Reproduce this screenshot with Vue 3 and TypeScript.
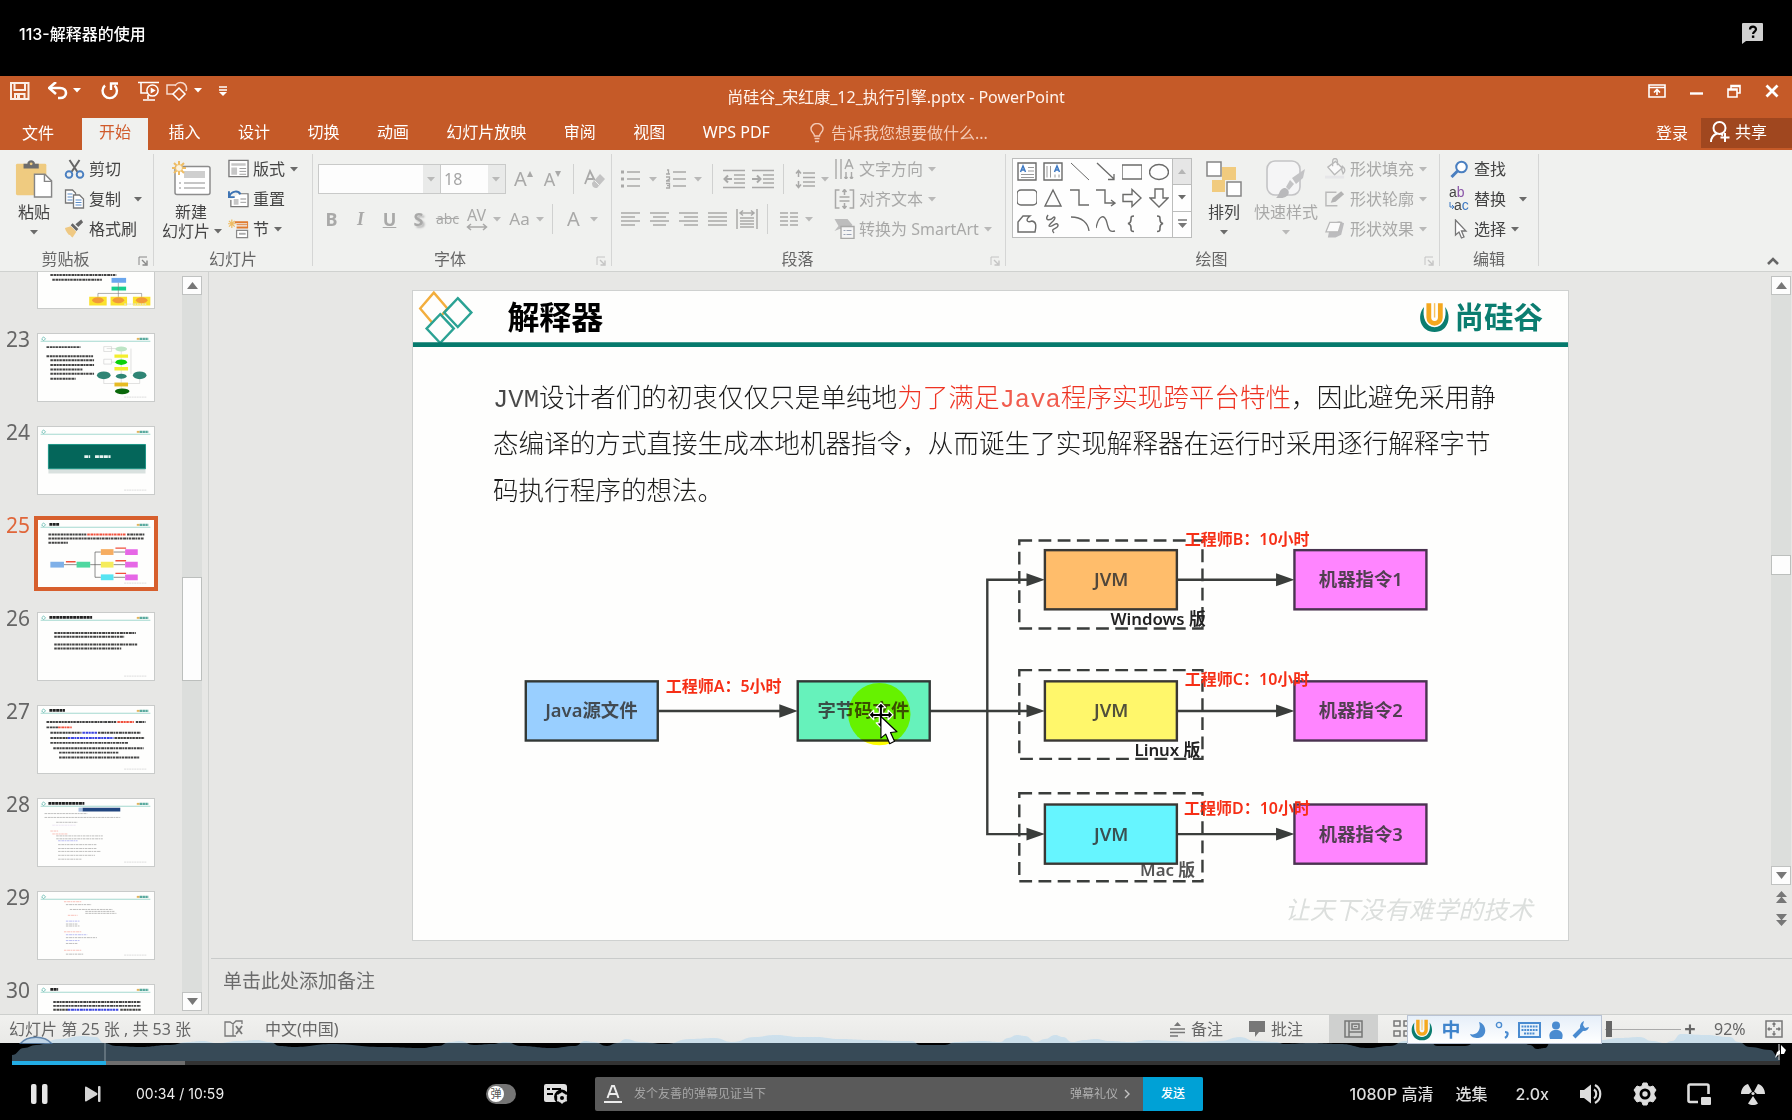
<script setup lang="ts">
import { h, ref } from 'vue'

type IconDef = [number, number, string]

const G = '#a9a9a8'
const D = '#6b6b6a'

const icons: Record<string, IconDef> = {
  help: [22, 22, '<path d="M1 0h19a1 1 0 0 1 1 1v16a1 1 0 0 1-1 1H4l-4 3V1a1 1 0 0 1 1-1z" fill="#d0d0d0"/><path d="M8 6.500C8 2.800 14 2.800 14 6.300c0 2.200-2.900 2.300-2.900 4.700" fill="none" stroke="#000" stroke-width="2.200"/><rect x="9.900" y="12.500" width="2.400" height="2.400" fill="#000"/>'],
  save: [20, 18, '<path d="M1 1h17.500v16H1z M4.500 1v7h10.500V1 M5 17v-5h9.500v5" fill="none" stroke="#fbeee8" stroke-width="2"/><path d="M7 13h3v4H7z" fill="#fbeee8"/>'],
  undo: [20, 18, '<path d="M2 6h10c8 0 8 10 0 10h-2" fill="none" stroke="#fff" stroke-width="2.600"/><path d="M8 0L1 6l7 6" fill="none" stroke="#fff" stroke-width="2.600"/>'],
  redo: [20, 18, '<path d="M5 3.500A7.200 7.200 0 1 0 14.500 3.500" fill="none" stroke="#fff" stroke-width="2.400"/><path d="M11 8V1.500h7" fill="none" stroke="#fff" stroke-width="2.400"/>'],
  present: [22, 20, '<path d="M0 1.500h21M3 2v10h6M10 14v4M5 19h12" fill="none" stroke="#fff" stroke-width="1.600"/><circle cx="14.500" cy="9.500" r="5.600" fill="#c55a28" stroke="#fff" stroke-width="1.500"/><path d="M12.700 6.500l5 3-5 3z" fill="#fff"/>'],
  shapes: [23, 20, '<path d="M8 13H1V4h9M9 5a5.500 5.500 0 1 1 11 5" fill="none" stroke="#f6d9cc" stroke-width="1.500"/><path d="M13 7l6 6-6 6-6-6z" fill="none" stroke="#fff" stroke-width="1.500"/>'],
  custom: [8, 10, '<path d="M0 1h8M0 4h8" stroke="#fff" stroke-width="1.300"/><path d="M0 6h8l-4 4z" fill="#fff"/>'],
  ribbonOpt: [18, 14, '<path d="M1 1h16v12H1zM1 3.500h16" fill="none" stroke="#fff" stroke-width="1.600"/><path d="M9 11V6M6 8.500L9 5.500l3 3" fill="none" stroke="#fff" stroke-width="1.600"/>'],
  min: [13, 14, '<path d="M0 9.500h13" stroke="#fff" stroke-width="2.400"/>'],
  restore: [14, 14, '<path d="M1 5h9v8H1zM4 5V1.500h9V9h-3M4 2.500h9M1 6h9" fill="none" stroke="#fff" stroke-width="1.600"/>'],
  close: [14, 14, '<path d="M1.500 1.500l11 11M12.500 1.500l-11 11" stroke="#fff" stroke-width="2.800"/>'],
  bulb: [14, 20, '<path d="M4.500 13C4.500 10 1 9.500 1 6a6 5.500 0 0 1 12 0c0 3.500-3.500 4-3.500 7zM4.500 15.500h5M5 18.500h4" fill="none" stroke="#f3c9b5" stroke-width="1.400"/>'],
  person: [20, 22, '<circle cx="9.500" cy="7" r="6" fill="none" stroke="#fff" stroke-width="2"/><path d="M1 21c0-4 2-7 6-8.500M11 13l2 1.500M15 12v9M10.500 16.500H19.500" fill="none" stroke="#fff" stroke-width="2"/>'],
  paste: [38, 40, '<rect x="0" y="4" width="32" height="33" rx="1.500" fill="#efcb80"/><path d="M8 9V4h4c0-5 8-5 8 0h4v5z" fill="#6d6d6d"/><circle cx="16" cy="4" r="1.500" fill="#efcb80"/><path d="M19.500 15h11l7 7v17h-18z" fill="#fff" stroke="#858585" stroke-width="1.500"/><path d="M30 15v7.500h7.500" fill="none" stroke="#858585" stroke-width="1.500"/>'],
  cut: [20, 20, '<path d="M5 1l8 12M15 1L7 13" stroke="#666" stroke-width="2"/><circle cx="4.500" cy="15.500" r="3.300" fill="none" stroke="#4a7fc0" stroke-width="1.900"/><circle cx="15.500" cy="15.500" r="3.300" fill="none" stroke="#4a7fc0" stroke-width="1.900"/>'],
  copy: [20, 20, '<path d="M1 1h7l3 3v10H1z" fill="#fff" stroke="#777" stroke-width="1.300"/><path d="M3 5h5M3 8h5M3 11h5" stroke="#5b8cc7"/><path d="M9 6h6l4 4v9H9z" fill="#fff" stroke="#777" stroke-width="1.300"/><path d="M11 11h6M11 13.500h6M11 16h6" stroke="#5b8cc7"/>'],
  brush: [22, 20, '<path d="M1 9l6-2 6 6-4 6c-2-1-2-3-4-3 0 0-3-3-4-7z" fill="#efc983"/><path d="M7 6l6 6 2-2-6-6zM12 5l6-5 2 3-5 5z" fill="#666"/>'],
  launch: [10, 10, '<path d="M1 9V1h8" fill="none" stroke="#888"/><path d="M4 4l4 4M9 4.500V9H4.500" fill="none" stroke="#888" stroke-width="1.400"/>'],
  launchOff: [10, 10, '<path d="M1 9V1h8" fill="none" stroke="#c4c4c4"/><path d="M4 4l4 4M9 4.500V9H4.500" fill="none" stroke="#c4c4c4" stroke-width="1.400"/>'],
  newSlide: [40, 36, '<rect x="4" y="5.500" width="35" height="28" rx="2" fill="#fff" stroke="#8d8d8d" stroke-width="1.500"/><path d="M13 10h21v7H13z" fill="#cfcfcf"/><path d="M13 22h21M13 27h21" stroke="#8d8d8d"/><path d="M8 22h2M8 27h2" stroke="#8d8d8d"/><g stroke="#eebc63" stroke-width="2"><path d="M8 0v14M1 7h14M3 2l10 10M13 2L3 12"/></g><circle cx="8" cy="7" r="3.500" fill="#fbf3df" stroke="#eebc63"/>'],
  layout: [22, 20, '<path d="M1 1h20v17H1z" fill="#fff" stroke="#777" stroke-width="1.400"/><path d="M3.500 4h15v2.500h-15zM3.500 8.500h6V16h-6z" fill="#c6c6c6"/><path d="M12 9.500h7M12 12.500h7M12 15.500h7" stroke="#999"/>'],
  reset: [22, 20, '<path d="M11 4.500h10V18H3v-7" fill="#fff" stroke="#777" stroke-width="1.300"/><path d="M6 10h5v6H6zM13 9h6v2h-6z" fill="#c6c6c6"/><path d="M13 13.500h6" stroke="#999"/><path d="M1 2v6h6M1.500 7C4 1 11 1 13 5" fill="none" stroke="#3d73b3" stroke-width="2"/>'],
  section: [22, 20, '<path d="M7 3h14M9 8.500h12" stroke="#e07b30" stroke-width="2"/><path d="M9 5.500h12M20.500 3v6" stroke="#e07b30"/><path d="M9 11.500h11.500V19H9z" fill="#fff" stroke="#888" stroke-width="1.300"/><path d="M11.500 15h7" stroke="#aaa" stroke-width="2"/><g stroke="#eebc63" stroke-width="1.300"><path d="M4 0v9M0 4.500h8M1 1.500l6 6M7 1.500l-6 6"/></g>'],
  eraser: [22, 20, `<path d="M1 15L6 2l5 10M3 10h6" fill="none" stroke="${G}" stroke-width="1.800"/><path d="M8 14L16 5l5 5-8 9c-4 0-5-2-5-5z" fill="#c3c3c3"/><path d="M10.500 11.500l5 5" stroke="#f0f1ef"/>`],
  bullets: [20, 20, `<path d="M6 3h13M6 10h13M6 17h13" stroke="${G}" stroke-width="1.500"/><path d="M0 1.500h3v3H0zM0 8.500h3v3H0zM0 15.500h3v3H0z" fill="${G}"/>`],
  numbers: [20, 20, `<path d="M7 3h13M7 10h13M7 17h13M1 1h1.500v4M0 5h4M0 8h3.500v2L0 12h4M0 14.500h3.500V19H0M1 16.700h2" fill="none" stroke="${G}" stroke-width="1.300"/>`],
  outdent: [22, 20, `<path d="M0 1.500h22M11 6h11M11 10h11M11 14h11M0 18.500h22" stroke="${G}" stroke-width="1.600"/><path d="M9 10H2M5 6.500L1.500 10 5 13.500" fill="none" stroke="${G}" stroke-width="2"/>`],
  indent: [22, 20, `<path d="M0 1.500h22M11 6h11M11 10h11M11 14h11M0 18.500h22" stroke="${G}" stroke-width="1.600"/><path d="M0 10h7M5 6.500L8.500 10 5 13.500" fill="none" stroke="${G}" stroke-width="2"/>`],
  spacing: [20, 20, `<path d="M8 4h12M8 8.500h12M8 13h12M8 17h12M3.500 2v6M3.500 12v6M1 4.500L3.500 1.500 6 4.500M1 15.500l2.500 3 2.500-3" fill="none" stroke="${G}" stroke-width="1.500"/>`],
  left: [20, 16, `<path d="M0 2h19M0 6h14M0 10h19M0 14h14" stroke="${G}" stroke-width="1.500"/>`],
  center: [20, 16, `<path d="M0 2h19M3 6h13M0 10h19M3 14h13" stroke="${G}" stroke-width="1.500"/>`],
  right: [20, 16, `<path d="M0 2h19M5 6h14M0 10h19M5 14h14" stroke="${G}" stroke-width="1.500"/>`],
  justify: [20, 16, `<path d="M0 2h19M0 6h19M0 10h19M0 14h19" stroke="${G}" stroke-width="1.500"/>`],
  distribute: [22, 20, `<path d="M1 0v20M21 0v20M4 9h14M4 12h14M4 15h14M4 18h14M4 4h14M7 1.500L4 4l3 2.500M15 1.500L18 4l-3 2.500" fill="none" stroke="${G}" stroke-width="1.500"/>`],
  columns: [18, 16, `<path d="M0 2h8M0 6h8M0 10h8M0 14h8M10 2h8M10 6h8M10 10h8M10 14h8" stroke="${G}" stroke-width="1.500"/>`],
  textDir: [20, 20, `<path d="M1.500 0v20M6.500 0v20M11.500 13v7M17 13v7M10 18l1.500 2 1.500-2M15.500 18l1.500 2 1.500-2M10.500 10L14.500 0l4 10M12 7h5" fill="none" stroke="${G}" stroke-width="1.400"/>`],
  alignText: [20, 20, `<path d="M5 1H1v18h4M15 1h4v18h-4M5 8h10M5 12h10M10 0v6M10 14v6M8 3l2-2.500L12 3M8 17l2 2.500 2-2.500" fill="none" stroke="${G}" stroke-width="1.500"/>`],
  smart: [20, 20, `<path d="M0 0h13l5 6-4 4H5L0 12l4-5z" fill="#bdbdbd"/><path d="M6.500 7.500h13v12h-13z" fill="#f5f5f5" stroke="${G}" stroke-width="1.400"/><path d="M9 11.500h2M12 11.500h5M9 15.500h2M12 15.500h5" stroke="#9aa3b5"/>`],
  arrange: [36, 36, '<path d="M16 6h14v13H16zM6 19h13v12H6z" fill="#f1cb7e"/><path d="M1 1h14v14H1zM21 21h14v14H21z" fill="#fff" stroke="#858585" stroke-width="1.500"/>'],
  quick: [40, 38, '<rect x="1" y="1" width="33" height="34" rx="8" fill="#f5f5f6" stroke="#c4c4c6" stroke-width="1.600"/><path d="M10 38c3-2 3-9 8-10 4 0 6 4 4 7-3 3-8 4-12 3z" fill="#b9b9bb"/><path d="M20 27l4-7 4 4-5 6zM26 18L39 9l-2 9-7 6z" fill="#c3c3c5"/>'],
  fill: [22, 22, '<path d="M3 9l8-6 7 7-8 7z" fill="#fafafa" stroke="#b9b9b9" stroke-width="1.400"/><path d="M8 8V3c0-4 5-4 5 0v4M18 8c4 3 3 6 1 8-1-4-3-6-1-8z" fill="none" stroke="#b9b9b9" stroke-width="1.400"/><path d="M0 18h20v3H0z" fill="#e6e6e8"/>'],
  outline: [22, 18, '<path d="M12 2H1v14h12" fill="none" stroke="#b9b9b9" stroke-width="1.500"/><path d="M6 13l2-5 9-7 3 3-9 8z" fill="#b3b3b3"/>'],
  effect: [22, 18, '<path d="M6 3l9-2 5 2-3 12-6 3H3z" fill="#bcbcbe"/><path d="M5 2h12l-3 10H1z" fill="#fafafa" stroke="#b9b9b9" stroke-width="1.400"/>'],
  find: [18, 18, '<circle cx="11" cy="7" r="5.300" fill="#fff" stroke="#4a7fc0" stroke-width="2"/><path d="M7 11l-6 6" stroke="#4a7fc0" stroke-width="3"/>'],
  select: [20, 20, '<path d="M6 1v15l3.500-3 2.500 6 2.500-1-2.500-6h4.500z" fill="#fff" stroke="#777" stroke-width="1.300"/>'],
  collapse: [12, 8, '<path d="M1 7l5-5 5 5" fill="none" stroke="#666" stroke-width="2.600"/>'],
  spell: [20, 18, '<path d="M9 3v13H1V2h5l3 2 3-3h6v3M9 16h3" fill="none" stroke="#777" stroke-width="1.300"/><path d="M12 6l6 8M18 6l-6 8" stroke="#777" stroke-width="1.800"/>'],
  notes: [16, 16, '<path d="M0 8h15M0 11.500h15M0 15h8" stroke="#777" stroke-width="1.400"/><path d="M4 5h7L7.500 1z" fill="#777"/>'],
  comment: [17, 16, '<path d="M0 0h16v11h-6l-4 5v-5H0z" fill="#777"/>'],
  normal: [20, 18, '<path d="M1 1h17v16H1zM5 1v16M5 12h13M8 4h7v5H8z" fill="none" stroke="#777" stroke-width="1.500"/><path d="M10 6.500h3" stroke="#777"/>'],
  sorter: [18, 18, '<path d="M1 1h6v5H1zM1 11h6v5H1zM11 1h6v5h-6zM11 11h6v5h-6z" fill="none" stroke="#777" stroke-width="1.500"/>'],
  fit: [18, 18, '<path d="M1 1h16v16H1z" fill="none" stroke="#777" stroke-width="1.500"/><path d="M9 3v4M9 11v4M3 9h4M11 9h4M7.500 4.500L9 3l1.500 1.500M7.500 13.500L9 15l1.500-1.500M4.500 7.500L3 9l1.500 1.500M13.500 7.500L15 9l-1.500 1.500" fill="none" stroke="#777" stroke-width="1.300"/>'],
  atguigu: [32, 32, '<path d="M5 5C-3 14 1 31 16 31S34 14 27 5c2 11-2 21-11 21S3 16 5 5z" fill="#0b7d70"/><path d="M10 1v15a6 6 0 0 0 12 0V1" fill="none" stroke="#f5a81f" stroke-width="5"/><path d="M16 1v15" stroke="#f9c25a" stroke-width="1.500"/>'],
  moon: [18, 18, '<path d="M10 1c8 2 9 15-1 16-4 0-7-1-8-4 6 2 12-4 9-12z" fill="#4a8bd0"/>'],
  punct: [14, 18, '<circle cx="4" cy="4" r="2.600" fill="none" stroke="#4a8bd0" stroke-width="1.400"/><path d="M10 11c4 0 3 4 0 6" fill="none" stroke="#4a8bd0" stroke-width="2.200"/>'],
  keyboard: [23, 16, '<rect x="1" y="1" width="21" height="14" fill="#eaf3fb" stroke="#4a8bd0" stroke-width="2"/><path d="M3.500 4.500h16M3.500 8h16M6 11.500h11" stroke="#4a8bd0" stroke-width="2.200" stroke-dasharray="2 .8"/>'],
  user: [14, 18, '<circle cx="7" cy="4.500" r="4" fill="#4a8bd0"/><path d="M1 18c-2-6 1-9 6-9s8 3 6 9z" fill="#4a8bd0"/>'],
  wrench: [18, 18, '<path d="M2 16L10 8" stroke="#4a8bd0" stroke-width="4"/><path d="M12 0C8 2 7 6 9 9c3 2 7 1 8-3l-4 1-2-3z" fill="#4a8bd0"/>'],
  pause: [17, 22, '<rect x="0" y="1" width="5.500" height="20" rx="2" fill="#e6e6e6"/><rect x="11" y="1" width="5.500" height="20" rx="2" fill="#e6e6e6"/>'],
  next: [16, 16, '<path d="M0 1.500Q0 0 1.500 .8L12 7q1 1 0 2L1.500 15.300Q0 16 0 14.500z" fill="#d5d5d5"/><rect x="13" y="0" width="2.500" height="16" rx="1" fill="#d5d5d5"/>'],
  dmset: [24, 20, '<path d="M2 0h18a3 3 0 0 1 3 3v5a7 7 0 0 0-11 10H2a2 2 0 0 1-2-2V2a2 2 0 0 1 2-2z" fill="#e0e0e0"/><path d="M3 5h3M8 5h9M3 10h6" stroke="#000" stroke-width="2"/><circle cx="18" cy="14" r="3.600" fill="none" stroke="#e0e0e0" stroke-width="2.600"/><path d="M18 8.500v11M13.200 11.200l9.600 5.600M13.200 16.800l9.600-5.600" stroke="#e0e0e0" stroke-width="2"/><circle cx="18" cy="14" r="2" fill="#000"/>'],
  fontA: [18, 20, '<path d="M3.500 14L8 2h2l4.500 12M5.500 10h7" fill="none" stroke="#ececec" stroke-width="2"/><path d="M0 18h18" stroke="#ececec" stroke-width="2.200"/>'],
  chevron: [7, 10, '<path d="M1 1l4 4-4 4" fill="none" stroke="#c4c4c4" stroke-width="1.400"/>'],
  volume: [22, 20, '<path d="M0 6h4l7-5.500v19L4 14H0z" fill="#ddd"/><path d="M14 5.500c3 2 3 7 0 9M15 1c7 4 7 14 0 18" fill="none" stroke="#ddd" stroke-width="2.200"/>'],
  gear: [24, 24, '<path d="M10 1h4l1 3 2 1 3-1 3 4-2 3v2l2 3-3 4-3-1-2 1-1 3h-4l-1-3-2-1-3 1-3-4 2-3v-2L1 8l3-4 3 1 2-1z" fill="#ddd" stroke="#ddd" stroke-linejoin="round"/><circle cx="12" cy="12" r="5.500" fill="#000"/><circle cx="12" cy="12" r="2.700" fill="#ddd"/>'],
  pip: [25, 22, '<path d="M11 19H3a1.500 1.500 0 0 1-1.500-1.500V3A1.500 1.500 0 0 1 3 1.500h17A1.500 1.500 0 0 1 21.500 3v8" fill="none" stroke="#ddd" stroke-width="2.600"/><rect x="14" y="14" width="10" height="8" rx="1" fill="#ddd"/>'],
  radio: [24, 22, '<path d="M7 1L11 8.500 8 11H0C0 6 3 2 7 1zM17 1L13 8.500 16 11h8C24 6 21 2 17 1zM12 13l-5 7.500c3 2 7 2 10 0z" fill="#ddd"/><circle cx="12" cy="10.500" r="1.600" fill="#ddd"/>'],
  pin: [14, 16, '<path d="M5 0v16" stroke="#bbb" stroke-width="1.300"/><path d="M7 1l5 5-2 4H7zM6 6l-3 2-2 6 3-3 2-1z" fill="#fff"/>'],
  up: [11, 7, '<path d="M0 7h11L5.500 0z" fill="#777"/>'],
  down: [11, 7, '<path d="M0 0h11L5.500 7z" fill="#777"/>'],
  prevSlide: [11, 12, '<path d="M0 6h11L5.500 0zM0 12h11L5.500 5.500z" fill="#777"/>'],
  nextSlide: [11, 12, '<path d="M0 0h11L5.500 6.500zM0 6h11l-5.500 6z" fill="#777"/>'],
  caret: [8, 5, `<path d="M0 0h8L4 4.500z" fill="${D}"/>`],
  caretOff: [8, 5, '<path d="M0 0h8L4 4.500z" fill="#b9b9b8"/>'],
  caretW: [8, 5, '<path d="M0 0h8L4 4.500z" fill="#fff"/>'],
  more: [9, 10, '<path d="M0 1h9" stroke="#777" stroke-width="1.500"/><path d="M0 4h9L4.500 9z" fill="#777"/>'],
}

const Icon = (props: { n: string }) => {
  const [w, hh, body] = icons[props.n]
  return h('svg', { class: 'ico', width: w, height: hh, viewBox: `0 0 ${w} ${hh}`, 'aria-hidden': 'true', innerHTML: body })
}

const tabs = ['开始', '插入', '设计', '切换', '动画', '幻灯片放映', '审阅', '视图', 'WPS PDF']
const activeTab = ref('开始')

const shapes: string[] = [
  `<path d="M1 1h18v17H1z" fill="#fff" stroke="${D}" stroke-width="1.400"/><path d="M3.500 10L6 4l2.500 6M4.500 8h3" stroke="#3d78c2" stroke-width="1.500" fill="none"/><path d="M11 5.500h6M11 9h6M4 12.500h13M4 15.500h13" stroke="#999"/>`,
  `<path d="M1 1h18v17H1z" fill="#fff" stroke="${D}" stroke-width="1.400"/><path d="M11.500 10L14 4l2.500 6M12.500 8h3" stroke="#3d78c2" stroke-width="1.500" fill="none"/><path d="M4 4v11.500M7.500 4v11.500M12 12.500v3M16 12.500v3" stroke="#999"/>`,
  `<path d="M1 1l18 17" stroke="${D}"/>`,
  `<path d="M1 1l17 16M18 12v5.500h-6" stroke="${D}" fill="none" stroke-width="1.300"/>`,
  `<path d="M0 3h20v14H0z" stroke="${D}" fill="none" stroke-width="1.400"/>`,
  `<ellipse cx="10" cy="10" rx="9.500" ry="7.500" stroke="${D}" fill="none" stroke-width="1.400"/>`,
  `<rect x="0" y="2" width="20" height="15" rx="4" stroke="${D}" fill="none" stroke-width="1.400"/>`,
  `<path d="M2 18L10 2l8 16z" stroke="${D}" fill="none" stroke-width="1.400"/>`,
  `<path d="M0 2h9v15h10" stroke="${D}" fill="none" stroke-width="1.400"/>`,
  `<path d="M0 2h9v13h9M15 12l4 3-4 3" stroke="${D}" fill="none" stroke-width="1.400"/>`,
  `<path d="M1 6.500h9V1.500l9 8.500-9 8.500v-5H1z" stroke="${D}" fill="none" stroke-width="1.400"/>`,
  `<path d="M6 1h8v9h5l-9 9-9-9h5z" stroke="${D}" fill="none" stroke-width="1.400"/>`,
  `<path d="M1 18V8l5-6h7c-5 4-3 7 2 5 5 1 4 6 3 11z" stroke="${D}" fill="none" stroke-width="1.400"/>`,
  `<path d="M5 1c-4 6 2 6 6 2 4 1-6 8-5 9 2 2 8-5 9-1s-9 3-4 8" stroke="${D}" fill="none" stroke-width="1.400"/>`,
  `<path d="M1 3c11 0 17 6 18 14" stroke="${D}" fill="none" stroke-width="1.300"/>`,
  `<path d="M0 14C3 0 9 0 11 9s4 9 8 8" stroke="${D}" fill="none" stroke-width="1.300"/>`,
  `<path d="M12 2c-3 0-3 1-3 3.500S8 9 6 9.500c2 .5 3 1 3 4s0 4 3 4" stroke="${D}" fill="none" stroke-width="1.600"/>`,
  `<path d="M8 2c3 0 3 1 3 3.500S12 9 14 9.500c-2 .5-3 1-3 4s0 4-3 4" stroke="${D}" fill="none" stroke-width="1.600"/>`,
]

/* Thumbnail drawing: [x1, x2, y, colour] for text runs, plus free markup. */
type Run = [number, number, number, string?]
interface Thumb { n?: number; title?: [number, number]; runs: Run[]; art?: string; faint?: boolean }

const R = '#f0503c'
const B = '#3a44e0'
const thumbs: Thumb[] = [
  { runs: [[12, 80, 35], [14, 65, 40]], art: '<rect x="75" y="38" width="15" height="5" fill="#6aa6ee"/><rect x="75" y="47" width="15" height="4" fill="#19cf8d"/><path d="M82 43v15M61 58v-4h45v4" stroke="#777" fill="none" stroke-width=".6"/><path d="M52 57.500h18v9H52zM74 57.500h17v9H74zM97 57.500h18v9H97z" fill="#fbe12d"/><ellipse cx="61" cy="61" rx="6" ry="3" fill="#f19a3a"/><ellipse cx="82" cy="61" rx="6" ry="3" fill="#f19a3a"/><ellipse cx="106" cy="61" rx="6" ry="3" fill="#f19a3a"/>' },
  { n: 23, runs: [[8, 43, 13.5], [8, 56, 23], [12, 57, 27], [12, 57, 32], [12, 45, 36.5], [12, 57, 41], [12, 38, 46]], art: '<path d="M70 15h10M67 13h8v5h-8zM67 26h8v5h-8zM75 29h4M67 47v4h11M104 47v4H92M95 15v26M85 17v40" stroke="#ccc" fill="none" stroke-width=".6"/><ellipse cx="85" cy="15.500" rx="6" ry="2.500" fill="#bde5c5"/><ellipse cx="85" cy="29" rx="6" ry="2.800" fill="#0bd00b"/><path d="M78 21h14v3.500H78zM78 34h14v3.500H78z" fill="#f3ee2e"/><path d="M78 50h14v4H78z" fill="#e6bb24"/><ellipse cx="67" cy="42.500" rx="7" ry="4" fill="#2f8575"/><ellipse cx="104" cy="42.500" rx="7" ry="4" fill="#2f8575"/><ellipse cx="85" cy="43.500" rx="5.500" ry="2.500" fill="#2f8575"/><ellipse cx="86" cy="59" rx="7.500" ry="3" fill="#0a680a"/>' },
  { n: 24, runs: [], art: '<path d="M10 43h100v5H10z" fill="#d9e1df"/><path d="M10 18h100v25H10z" fill="#04665a" stroke="#1b9485"/><path d="M47 30.500h6M58 30.500h16" stroke="#e7f3f1" stroke-width="3" stroke-dasharray="4 .6"/>' },
  { n: 25, title: [11, 21], runs: [[10, 49, 15], [50, 90, 15, R], [91, 109, 15], [10, 108, 19], [10, 30, 23.5]], art: '<path d="M26 46h14M53 46h12M58 33v26M58 33h6M58 59h6M77 33h12M77 46h12M77 59h12" stroke="#555" fill="none" stroke-width=".7"/><path d="M28 43h10M79 29h11M79 42h11M79 55h11" stroke="#f0503c" stroke-width="1.400"/><rect x="12" y="43" width="14" height="6" fill="#7fb0e8"/><rect x="39" y="43" width="14" height="6" fill="#4fd8a0"/><path d="M64 30h13v6H64z" fill="#f6ad61"/><path d="M64 43h13v6H64z" fill="#f5ec5c"/><path d="M64 56h13v6H64z" fill="#57e4f2"/><path d="M89 30h13v6H89zM89 43h13v6H89zM89 56h13v6H89z" fill="#e667e6"/>' },
  { n: 26, title: [11, 55], runs: [[16, 100, 20.5], [16, 88, 24.5], [16, 102, 32.5], [16, 85, 36.5]] },
  { n: 27, title: [11, 27], runs: [[8, 68, 16.5], [68, 80, 16.5], [81, 98, 16.5, R], [100, 110, 16.5], [8, 20, 22], [20, 34, 22, R], [12, 44, 27.5], [45, 60, 27.5, B], [61, 105, 27.5], [12, 30, 33], [30, 77, 33, B], [78, 109, 33], [12, 92, 38], [15, 108, 43.5], [21, 82, 48], [21, 104, 53]] },
  { n: 28, title: [10, 47], faint: true, runs: [[6, 50, 15], [6, 84, 19], [18, 40, 24], [14, 38, 27, '#c9b3e0'], [12, 20, 33, R], [14, 30, 36, R], [18, 66, 38], [18, 66, 41], [20, 40, 43, B], [20, 60, 47], [20, 60, 51], [20, 64, 54], [20, 58, 58], [20, 44, 62]], art: '<path d="M45 9h39v4H45z" fill="#21457f"/><path d="M41 9h4v4h-4z" fill="#a9c1e4"/>' },
  { n: 29, faint: true, runs: [[26, 44, 10, R], [28, 54, 13], [32, 76, 18], [48, 78, 20], [48, 80, 22], [30, 40, 24, R], [28, 42, 30, B], [28, 40, 33], [28, 42, 35], [26, 44, 41, R], [28, 50, 44, B], [28, 60, 47], [28, 42, 50, B], [28, 40, 53], [26, 44, 60, R], [28, 46, 64]] },
  { n: 30, title: [12, 20], runs: [[15, 105, 17.5], [15, 105, 21.5], [15, 30, 25.5], [30, 82, 25.5, B], [84, 105, 25.5]] },
]

/* Danmaku density curve above the progress bar. */
const curve: [number, number][] = [
  [0, 24], [12, 17], [24, 14], [48, 8], [70, 5], [84, 6], [92, 12], [104, 15], [128, 16], [158, 14], [176, 11], [190, 10], [205, 12], [228, 10], [244, 9], [258, 11], [268, 15], [282, 16], [320, 13], [370, 16], [410, 17], [426, 15], [438, 11], [448, 10], [462, 14], [480, 13], [494, 11], [508, 15], [540, 17], [563, 15], [573, 10], [582, 11], [595, 15], [605, 12], [614, 8], [628, 11], [653, 13], [678, 8], [703, 7], [720, 11], [743, 6], [763, 4], [788, 6], [803, 6], [828, 8], [858, 9], [888, 10], [900, 10], [908, 14], [933, 14], [943, 11], [970, 10], [988, 11], [996, 7], [1005, 4], [1013, 5], [1024, 11], [1033, 8], [1043, 4], [1051, 6], [1060, 11], [1073, 9], [1083, 8], [1098, 10], [1118, 11], [1138, 9], [1160, 10], [1184, 11], [1208, 10], [1228, 6], [1243, 10], [1263, 11], [1273, 13], [1298, 12], [1328, 13], [1356, 17], [1378, 15], [1393, 10], [1418, 11], [1425, 15], [1453, 15], [1466, 10], [1488, 11], [1508, 10], [1518, 14], [1525, 18], [1533, 17], [1540, 9], [1563, 6], [1588, 9], [1608, 7], [1628, 6], [1640, 10], [1653, 12], [1660, 10], [1669, 3], [1693, 4], [1718, 6], [1726, 11], [1738, 16], [1758, 19], [1767, 26],
]
const wave = (() => {
  let d = `M0 30L${curve[0][0]} ${curve[0][1]}`
  for (let i = 0; i < curve.length - 1; i++) {
    const [x1, y1] = curve[i]
    const [x2, y2] = curve[i + 1]
    const m = (x1 + x2) / 2
    d += `C${m} ${y1} ${m} ${y2} ${x2} ${y2}`
  }
  return d + 'L1768 30Z'
})()

/* Diagram lanes on the slide. */
const lanes = [
  { y: 361, color: '#ffbd6b', dash: [312, 110], eng: '工程师B：10小时', ey: 317, ex: 965, os: 'Windows 版', ox: 872, oy: 418, oc: '#222', out: '机器指令1' },
  { y: 525, color: '#fff76b', dash: [474, 111], eng: '工程师C：10小时', ey: 493, ex: 965, os: 'Linux 版', ox: 902, oy: 581, oc: '#222', out: '机器指令2' },
  { y: 679, color: '#66f5ff', dash: [628, 110], eng: '工程师D：10小时', ey: 654, ex: 964, os: 'Mac 版', ox: 909, oy: 731, oc: '#555', out: '机器指令3' },
]
const danmaku = ref(false)
const zoomLevel = ref(2)
const played = 5.3
const buffered = 9.8
</script>

<template>
  <div class="page">
    <header class="video-title">
      <h1>113-解释器的使用</h1>
      <button aria-label="帮助"><Icon n="help" /></button>
    </header>

    <div class="titlebar">
      <div class="qat">
        <button class="save" aria-label="保存"><Icon n="save" /></button>
        <button class="undo" aria-label="撤消"><Icon n="undo" /><Icon n="caretW" /></button>
        <button class="redo" aria-label="重复"><Icon n="redo" /></button>
        <button class="show" aria-label="从头开始"><Icon n="present" /></button>
        <button class="shp" aria-label="形状"><Icon n="shapes" /><Icon n="caretW" /></button>
        <button aria-label="自定义"><Icon n="custom" /></button>
      </div>
      <div class="doc-name">尚硅谷_宋红康_12_执行引擎.pptx - PowerPoint</div>
      <div class="win">
        <button aria-label="功能区显示选项"><Icon n="ribbonOpt" /></button>
        <button aria-label="最小化"><Icon n="min" /></button>
        <button aria-label="还原"><Icon n="restore" /></button>
        <button aria-label="关闭"><Icon n="close" /></button>
      </div>
    </div>

    <div class="tabrow">
      <button class="file">文件</button>
      <nav class="tabs">
        <button v-for="t in tabs" :key="t" :class="{ on: t === activeTab }" @click="activeTab = t">{{ t }}</button>
      </nav>
      <button class="tell"><Icon n="bulb" />告诉我您想要做什么...</button>
      <button class="login">登录</button>
      <button class="share"><Icon n="person" />共享</button>
    </div>

    <div class="ribbon">
      <section class="group g1">
        <div class="cmds">
          <button class="big"><Icon n="paste" /><span>粘贴</span><Icon n="caret" /></button>
          <div class="col">
            <button><Icon n="cut" />剪切</button>
            <button><Icon n="copy" />复制<Icon n="caret" class="far" /></button>
            <button><Icon n="brush" />格式刷</button>
          </div>
        </div>
        <div class="gl">剪贴板</div>
        <Icon n="launch" class="launch" />
      </section>

      <section class="group g2">
        <div class="cmds">
          <button class="big"><Icon n="newSlide" /><span>新建</span><span class="two">幻灯片<Icon n="caret" /></span></button>
          <div class="col">
            <button><Icon n="layout" />版式<Icon n="caret" class="near" /></button>
            <button><Icon n="reset" />重置</button>
            <button><Icon n="section" />节<Icon n="caret" class="near" /></button>
          </div>
        </div>
        <div class="gl">幻灯片</div>
      </section>

      <section class="group g3">
        <div class="tools">
          <div class="trow">
            <div class="combo family"><select aria-label="字体" disabled><option></option></select><Icon n="caretOff" /></div>
            <div class="combo size"><select aria-label="字号" disabled><option>18</option></select><Icon n="caretOff" /></div>
            <button class="t grow" aria-label="增大字号">A<sup>▴</sup></button>
            <button class="t shrink" aria-label="减小字号">A<sup>▾</sup></button>
            <i class="bar"></i>
            <button class="t" aria-label="清除格式"><Icon n="eraser" /></button>
          </div>
          <div class="trow">
            <button class="t b">B</button>
            <button class="t i">I</button>
            <button class="t u">U</button>
            <button class="t s">S</button>
            <button class="t abc">abc</button>
            <button class="t av"><span>AV</span><svg width="22" height="8" viewBox="0 0 22 8"><path d="M1 4h20M5 1L1.500 4 5 7M17 1l3.500 3L17 7" fill="none" stroke="#a9a9a8" stroke-width="1.500" /></svg></button>
            <Icon n="caretOff" class="c" />
            <button class="t aa">Aa</button>
            <Icon n="caretOff" class="c" />
            <i class="bar"></i>
            <button class="t fa">A</button>
            <Icon n="caretOff" class="c" />
          </div>
        </div>
        <div class="gl">字体</div>
        <Icon n="launchOff" class="launch" />
      </section>

      <section class="group g4 off">
        <div class="cmds">
          <div class="tools">
            <div class="trow">
              <button class="t" aria-label="项目符号"><Icon n="bullets" /></button><Icon n="caretOff" class="c wide" />
              <button class="t" aria-label="编号"><Icon n="numbers" /></button><Icon n="caretOff" class="c wide" />
              <i class="bar"></i>
              <button class="t" aria-label="降低列表级别"><Icon n="outdent" /></button>
              <button class="t" aria-label="提高列表级别"><Icon n="indent" /></button>
              <i class="bar"></i>
              <button class="t" aria-label="行距"><Icon n="spacing" /></button><Icon n="caretOff" class="c" />
            </div>
            <div class="trow">
              <button class="t" aria-label="左对齐"><Icon n="left" /></button>
              <button class="t" aria-label="居中"><Icon n="center" /></button>
              <button class="t" aria-label="右对齐"><Icon n="right" /></button>
              <button class="t" aria-label="两端对齐"><Icon n="justify" /></button>
              <button class="t" aria-label="分散对齐"><Icon n="distribute" /></button>
              <i class="bar"></i>
              <button class="t" aria-label="分栏"><Icon n="columns" /></button><Icon n="caretOff" class="c" />
            </div>
          </div>
          <div class="col">
            <button><Icon n="textDir" />文字方向<Icon n="caretOff" class="near" /></button>
            <button><Icon n="alignText" />对齐文本<Icon n="caretOff" class="near" /></button>
            <button><Icon n="smart" />转换为 SmartArt<Icon n="caretOff" class="near" /></button>
          </div>
        </div>
        <div class="gl">段落</div>
        <Icon n="launchOff" class="launch" />
      </section>

      <section class="group g5">
        <div class="cmds">
          <div class="gallery">
            <div class="cells">
              <button v-for="(s, i) in shapes" :key="i" aria-label="形状"><svg width="20" height="20" viewBox="0 0 20 20" v-html="s"></svg></button>
            </div>
            <div class="gscroll">
              <button class="dim" aria-label="上一行"><svg width="8" height="5" viewBox="0 0 8 5"><path d="M0 5h8L4 0z" fill="#b5b5b5" /></svg></button>
              <button aria-label="下一行"><Icon n="caret" /></button>
              <button aria-label="其他"><Icon n="more" /></button>
            </div>
          </div>
          <button class="big"><Icon n="arrange" /><span>排列</span><Icon n="caret" /></button>
          <button class="big quick"><Icon n="quick" /><span>快速样式</span><Icon n="caretOff" /></button>
          <div class="col off">
            <button><Icon n="fill" />形状填充<Icon n="caretOff" class="near" /></button>
            <button><Icon n="outline" />形状轮廓<Icon n="caretOff" class="near" /></button>
            <button><Icon n="effect" />形状效果<Icon n="caretOff" class="near" /></button>
          </div>
        </div>
        <div class="gl">绘图</div>
        <Icon n="launchOff" class="launch" />
      </section>

      <section class="group g6">
        <div class="cmds">
          <div class="col">
            <button><Icon n="find" />查找</button>
            <button><span class="rep"><span>a<b>b</b></span><span><svg width="5" height="8" viewBox="0 0 5 8"><path d="M1 0v5h4M3 3l2 2-2 2" fill="none" stroke="#3d78c2" /></svg>a<em>c</em></span></span>替换<Icon n="caret" class="far" /></button>
            <button><Icon n="select" />选择<Icon n="caret" class="near" /></button>
          </div>
        </div>
        <div class="gl">编辑</div>
      </section>
      <button class="collapse" aria-label="折叠功能区"><Icon n="collapse" /></button>
    </div>

    <main class="work">
      <aside class="panel">
        <ol class="thumbs">
          <li v-for="(t, k) in thumbs" :key="k" :class="{ sel: t.n === 25 }">
            <span class="num">{{ t.n }}</span>
            <svg class="thumb" viewBox="0 0 118 69">
              <g stroke="#4fb0a4" fill="none" stroke-width=".8"><path d="M3 5l2-2 2 2-2 2z" /></g>
              <path d="M2 7.500h113" stroke="#a5d8cf" stroke-width="1.200" />
              <path d="M101 5h3" stroke="#e2b45d" stroke-width="2" /><path d="M104 5h9" stroke="#58a99d" stroke-width="2.400" stroke-dasharray="2.500 .4" />
              <path v-if="t.title" :d="`M${t.title[0]} 4.500H${t.title[1]}`" stroke="#222" stroke-width="2.600" stroke-dasharray="3 .5" />
              <g :opacity="t.faint ? .35 : 1">
                <path v-for="(r, i) in t.runs" :key="i" :d="`M${r[0]} ${r[2]}H${r[1]}`" :stroke="r[3] || '#444'" :stroke-width="t.faint ? 1 : 2" stroke-dasharray="2.600 .7 3 .5 1.800 .6" />
              </g>
              <g v-html="t.art || ''"></g>
              <path d="M88 65h23" stroke="#e3e3e3" stroke-width="1.200" stroke-dasharray="2 .6" />
            </svg>
          </li>
        </ol>
        <div class="scroll">
          <button aria-label="向上滚动"><Icon n="up" /></button>
          <div class="track left"><div class="knob"></div></div>
          <button aria-label="向下滚动"><Icon n="down" /></button>
        </div>
      </aside>

      <div class="editor">
        <div class="stage-row">
          <div class="stage">
            <svg class="slide" viewBox="0 0 1444 812" role="img" aria-label="解释器">
              <g fill="none" stroke-width="3">
                <path d="M26 2l17 20-17 20L9 22z" stroke="#f3ae3d" />
                <path d="M56 9l17 18-17 18-17-18z" stroke="#2ba294" fill="#fefefd" />
                <path d="M34 29l17 18-17 18-17-18z" stroke="#2ba294" fill="#fefefd" />
              </g>
              <path d="M0 67h1444" stroke="#067a6d" stroke-width="6" />
              <text class="s-title" x="118" y="48">解释器</text>
              <g transform="translate(1258 14) scale(1.2)" v-html="icons.atguigu[2]"></g>
              <text class="s-logo" x="1302" y="46">尚硅谷</text>

              <text class="s-body" x="100" y="145"><tspan class="lat">JVM</tspan>设计者们的初衷仅仅只是单纯地<tspan class="hot">为了满足<tspan class="lat">Java</tspan>程序实现跨平台特性</tspan>，因此避免采用静</text>
              <text class="s-body" x="100" y="203">态编译的方式直接生成本地机器指令，从而诞生了实现解释器在运行时采用逐行解释字节</text>
              <text class="s-body" x="100" y="261">码执行程序的想法。</text>

              <g fill="none" stroke="#3a3d3b" stroke-width="3">
                <path d="M306 525H466M646 525H775" />
                <path d="M775 361H718V679H775" />
                <path d="M956 361H1086M956 525H1086M956 679H1086" />
              </g>
              <path d="M458 516.500l23 8.500-23 8.500z" fill="#3a3d3b" />
              <g stroke="#323836" stroke-width="3">
                <rect x="141" y="488" width="165" height="74" fill="#99cfff" />
                <rect x="481" y="488" width="165" height="74" fill="#66f2bb" />
              </g>
              <text class="s-node" x="223" y="533">Java源文件</text>
              <text class="s-node" x="563" y="533">字节码文件</text>
              <text class="s-eng" x="316" y="501">工程师A：5小时</text>

              <g v-for="l in lanes" :key="l.y">
                <rect x="758" :y="l.dash[0]" width="229" :height="l.dash[1]" fill="none" stroke="#3a3d3b" stroke-width="3" stroke-dasharray="16 8" />
                <path :d="`M767 ${l.y - 8}l23 8-23 8zM1079 ${l.y - 8}l23 8-23 8z`" fill="#3a3d3b" />
                <text class="s-os" :x="l.ox" :y="l.oy" :fill="l.oc">{{ l.os }}</text>
                <rect x="790" :y="l.y - 37" width="165" height="74" :fill="l.color" stroke="#3a3834" stroke-width="3" />
                <rect x="1102" :y="l.y - 37" width="165" height="74" fill="#ff85ff" stroke="#4a3350" stroke-width="3" />
                <text class="s-node" x="873" :y="l.y + 8">JVM</text>
                <text class="s-node" x="1185" :y="l.y + 8">{{ l.out }}</text>
                <text class="s-eng" :x="l.ex" :y="l.ey">{{ l.eng }}</text>
              </g>

              <text class="s-mark" x="1090" y="785">让天下没有难学的技术</text>

              <circle class="halo" cx="583" cy="529" r="39" />
              <g transform="translate(585 530)" stroke="#fff" stroke-width="1.500" stroke-linejoin="round">
                <path d="M0-15l6 6H2v7h7v-4l6 6-6 6V2H2v8h4l-6 6-6-6h4V2h-7v4l-6-6 6-6v4h7v-7h-4z" fill="#000" />
                <path d="M0 2v27l6-5 5 12 6-3-5-11 8-1z" fill="#fff" stroke="#000" />
              </g>
            </svg>
          </div>
          <div class="scroll main">
            <button aria-label="上一页"><Icon n="up" /></button>
            <div class="track"><div class="knob"></div></div>
            <button aria-label="下一页"><Icon n="down" /></button>
            <button class="bare" aria-label="上一张幻灯片"><Icon n="prevSlide" /></button>
            <button class="bare" aria-label="下一张幻灯片"><Icon n="nextSlide" /></button>
          </div>
        </div>
        <div class="notes">单击此处添加备注</div>
      </div>
    </main>

    <div class="status">
      <span class="count">幻灯片 第 25 张 , 共 53 张</span>
      <Icon n="spell" />
      <span class="lang">中文(中国)</span>
      <button class="st"><Icon n="notes" />备注</button>
      <button class="st"><Icon n="comment" />批注</button>
      <button class="view" aria-label="普通视图"><Icon n="normal" /></button>
      <div class="views">
        <button aria-label="幻灯片浏览"><Icon n="sorter" /></button>
        <div class="ime">
          <svg width="22" height="24" viewBox="0 0 32 32" v-html="icons.atguigu[2]"></svg>
          <b>中</b>
          <Icon n="moon" /><Icon n="punct" /><Icon n="keyboard" /><Icon n="user" /><Icon n="wrench" />
        </div>
      </div>
      <input v-model="zoomLevel" class="zoom" type="range" min="0" max="100" aria-label="显示比例" />
      <button class="plus" aria-label="放大">+</button>
      <span class="pct">92%</span>
      <button class="fit" aria-label="适应窗口"><Icon n="fit" /></button>
    </div>

    <footer class="player">
      <svg class="wave" viewBox="0 0 1768 30" preserveAspectRatio="none" aria-hidden="true">
        <path :d="wave" fill="rgba(153,206,242,.36)" />
        <path d="M93 12v18" stroke="#8b98a1" />
      </svg>
      <svg class="orb" width="34" height="8" viewBox="0 0 34 8" aria-hidden="true"><path d="M1 8C8-1 26-1 33 8z" fill="#b5cfe6" stroke="#426e9e" stroke-width="1.500" /></svg>
      <div class="progress"><div class="buffer" :style="{ width: buffered + '%' }"></div><div class="played" :style="{ width: played + '%' }"></div></div>
      <Icon n="pin" class="pin" />
      <div class="controls">
        <div class="cl">
          <button class="pause" aria-label="暂停"><Icon n="pause" /></button>
          <button class="next" aria-label="下一个"><Icon n="next" /></button>
          <span class="time">00:34 / 10:59</span>
        </div>
        <div class="cc">
          <label class="switch"><input v-model="danmaku" type="checkbox" aria-label="弹幕开关" /><span>弹</span></label>
          <button class="dms" aria-label="弹幕设置"><Icon n="dmset" /></button>
          <form class="send" @submit.prevent>
            <button type="button" class="fontbtn" aria-label="弹幕样式"><Icon n="fontA" /></button>
            <input type="text" placeholder="发个友善的弹幕见证当下" aria-label="弹幕内容" />
            <a href="#">弹幕礼仪<Icon n="chevron" /></a>
            <button class="submit">发送</button>
          </form>
        </div>
        <div class="cr">
          <button class="q">1080P 高清</button>
          <button class="sel-ep">选集</button>
          <button class="rate">2.0x</button>
          <button class="icon-btn" aria-label="音量"><Icon n="volume" /></button>
          <button class="icon-btn" aria-label="设置"><Icon n="gear" /></button>
          <button class="icon-btn" aria-label="画中画"><Icon n="pip" /></button>
          <button class="icon-btn" aria-label="投币"><Icon n="radio" /></button>
        </div>
      </div>
    </footer>
  </div>
</template>

<style>
body { background: #000; }
</style>

<style scoped>
.page, .page * { box-sizing: border-box; }
.page {
  font-family: "Noto Sans", "Noto Sans CJK SC", sans-serif;
  font-size: 16px;
  line-height: 24px;
  color: #444;
  background: #000;
  overflow: hidden;
}
button {
  display: flex;
  align-items: center;
  padding: 0;
  border: 0;
  background: none;
  color: inherit;
  font: inherit;
  white-space: nowrap;
}
.ico { flex: none; display: block; }

.video-title {
  display: flex;
  justify-content: space-between;
  align-items: flex-start;
  height: 76px;
  padding: 22px 28px 0 19px;
}
.video-title h1 {
  margin: 0;
  font: 500 16px/24px Inter, "Noto Sans CJK SC", sans-serif;
  color: #fff;
}
.video-title button { margin-top: 1px; }

.titlebar {
  display: grid;
  grid-template-columns: 1fr auto 1fr;
  height: 42px;
  background: #c55a28;
  color: #fff3ec;
}
.qat, .win { display: flex; align-items: center; height: 29px; }
.qat { padding-left: 10px; }
.qat button { gap: 5px; }
.undo, .show { margin-left: 18px; }
.redo { margin-left: 19px; }
.shp { margin: 0 17px 0 6px; }
.doc-name { padding-top: 9px; }
.win { justify-content: flex-end; padding: 1px 13px 0 0; gap: 24px; }

.tabrow {
  display: flex;
  height: 32px;
  background: #c55a28;
  color: #fff;
  line-height: 30px;
}
.tabrow > button { padding-bottom: 2px; }
.file { width: 82px; padding-left: 22px; }
.tabs { display: flex; justify-content: space-between; width: 705px; }
.tabs button { padding: 0 17px 4px; }
.tabs .on { background: #f0f1ef; color: #d05b2c; }
.tell { margin-left: 23px; gap: 7px; color: #f3c9b5; }
.login { margin-left: auto; margin-right: 13px; }
.share { width: 91px; padding-left: 9px; gap: 5px; background: #a0471f; height: 30px; }

.ribbon {
  display: flex;
  align-items: flex-start;
  height: 122px;
  padding: 4px 0 5px;
  background: #f0f1ef;
  border-bottom: 1px solid #cfd1cf;
}
.group {
  position: relative;
  flex: none;
  height: 112px;
  border-right: 1px solid #d5d6d5;
}
.cmds { display: flex; height: 90px; }
.gl { height: 22px; line-height: 30px; text-align: center; color: #666; }
.launch { position: absolute; right: 5px; bottom: 0; }
.off { color: #a9a9a8; }
.col button { height: 30px; gap: 4px; }
.col .ico:first-child, .rep { flex: none; width: 21px; }
.far { margin-left: 9px; }
.near { margin-left: 1px; }
.big { flex-direction: column; align-items: center; padding-top: 6px; }
.big > .ico:first-child { height: 38px; }
.big > span { height: 24px; line-height: 28px; }
.big > .ico:last-child { margin-top: 8px; }
.big .two { display: flex; align-items: center; gap: 4px; margin-left: 2px; height: 18px; line-height: 18px; }
.g1 { width: 154px; }
.g1 .big { width: 54px; margin-left: 7px; }
.g1 .col { margin-left: 3px; }
.g1 .gl { padding-right: 22px; }
.g2 { width: 159px; }
.g2 .big { width: 66px; margin-left: 4px; }
.g2 .col { margin-left: 4px; }
.g3 { width: 299px; }
.g3 .gl { padding-right: 24px; }
.g4 { width: 394px; }
.g4 .gl { padding-right: 22px; color: #666; }
.g4 .tools { width: 222px; flex: none; padding-left: 4px; }
.g5 { width: 434px; }
.g5 .gl { padding-right: 22px; }
.g5 .big { width: 44px; margin-left: 10px; }
.g5 .quick { width: 68px; margin-left: 6px; color: #a9a9a8; }
.g5 .col { margin-left: 5px; }
.g6 { width: 99px; }
.g6 .cmds { padding-left: 9px; }

.tools { height: 90px; padding: 10px 0 0 4px; }
.trow { display: flex; align-items: center; height: 30px; margin-bottom: 10px; color: #a9a9a8; }
.t { justify-content: center; width: 29px; height: 30px; flex: none; }
.c { margin: 0 2px; }
.c.wide { margin: 0 4px; }
.bar { width: 1px; height: 30px; margin: 0 6px; background: #d0d1d0; }
.combo { position: relative; height: 30px; border: 1px solid #c9cac9; background: #fdfdfd; display: flex; align-items: center; }
.combo select {
  width: 100%;
  height: 28px;
  padding: 0 3px;
  border: 0;
  border-right: 17px solid #e9eae9;
  background: #fdfdfd;
  color: #a5a5a5;
  font: inherit;
  opacity: 1;
  appearance: none;
}
.combo .ico { position: absolute; right: 5px; top: 12px; }
.family { width: 123px; margin-left: 1px; }
.size { width: 66px; margin-right: 3px; margin-left: -1px; }
.grow { font-size: 20px; }
.shrink { font-size: 18px; }
.t sup { font-size: 12px; line-height: 12px; margin-bottom: 12px; }
.b, .u, .s { font-weight: 700; font-size: 18px; }
.i { font-style: italic; font-size: 18px; font-family: "Liberation Serif", serif; font-weight: 700; }
.u { text-decoration: underline; }
.s { text-shadow: 2px 2px 2px #bbb; }
.abc { text-decoration: line-through; font-size: 14px; }
.av { flex-direction: column; }
.av span { height: 16px; line-height: 16px; }
.aa { font-size: 17px; margin-left: 2px; }
.fa { font-size: 20px; }

.gallery { display: flex; width: 180px; height: 80px; margin: 4px 0 0 6px; border: 1px solid #bcbdbc; background: #fefefe; }
.cells { flex: 1; display: grid; grid-template-columns: repeat(6, 1fr); grid-template-rows: repeat(3, 1fr); padding-left: 1px; }
.cells button { justify-content: center; }
.gscroll { display: flex; flex-direction: column; width: 19px; border-left: 1px solid #bcbdbc; }
.gscroll button { flex: 1; justify-content: center; border-bottom: 1px solid #bcbdbc; }
.gscroll button:last-child { border-bottom: 0; }
.gscroll .dim { background: #e6e6e6; }
.rep { display: flex; flex-direction: column; font: 14px/13px "Liberation Sans", sans-serif; text-align: left; }
.rep > span { height: 13px; }
.rep b { color: #8a56a8; font-weight: 400; }
.rep em { color: #3d78c2; font-style: normal; }
.collapse { margin: 103px 13px 0 auto; }

.work { display: grid; grid-template-columns: 209px minmax(0, 1fr); background: #e7e7e5; }
.panel { contain: size; position: relative; display: flex; overflow: hidden; border-right: 1px solid #d0d2d0; }
.thumbs { flex: 1; margin: -32px 0 0; padding: 0; list-style: none; }
.thumbs li { display: flex; height: 93px; padding-left: 6px; }
.num { width: 31px; margin-top: -9px; font-size: 21px; line-height: 30px; color: #666; }
.thumb { width: 118px; height: 69px; background: #fefefd; border: 1px solid #c9cbca; }
.sel .num { color: #e0663a; }
.sel .thumb { outline: 4px solid #d75f2d; outline-offset: -1px; }
.scroll { display: flex; flex-direction: column; flex: none; width: 20px; margin: 4px 6px 3px 0; }
.scroll button { justify-content: center; height: 19px; flex: none; border: 1px solid #c0c2c1; background: #fdfdfd; }
.scroll .bare { height: 23px; border: 0; background: none; }
.track { flex: 1; display: flex; flex-direction: column; background: #dcdedc; }
.knob { height: 20px; border: 1px solid #bcbfbd; background: #fdfdfd; }
.track::before { content: ""; flex: 260; }
.track::after { content: ""; flex: 292; }
.track.left .knob { height: 104px; }
.track.left::before { flex: 282; }
.track.left::after { flex: 312; }

.stage-row { display: flex; }
.stage { flex: 1; min-width: 0; padding: 19px 203px 18px 204px; }
.slide { display: block; width: 100%; background: #fefefd; outline: 1px solid #cfd1d0; }
.scroll.main { margin: 4px 1px 27px 0; }
.notes { height: 56px; margin-left: 2px; padding: 8px 12px; border-top: 1px solid #c9cbca; font-size: 19px; line-height: 28px; color: #6b6b6b; }

.s-title { font: 700 40px "Noto Sans CJK SC", sans-serif; fill: #000; }
.s-logo { font: 700 37px "Noto Sans CJK SC", sans-serif; fill: #0b7d70; }
.s-body { font: 300 32px "Liberation Mono", "Noto Sans CJK SC", monospace; fill: #1a1a1a; }
.s-body .lat { font-weight: 400; fill-opacity: .8; }
.s-body .hot { fill: #ee3322; }
.s-node { font: 600 23px "Noto Sans", "Noto Sans CJK SC", sans-serif; fill: #323232; fill-opacity: .85; text-anchor: middle; }
.s-eng { font: 600 20px "Noto Sans", "Noto Sans CJK SC", sans-serif; fill: #f62f16; }
.s-os { font: 600 21px "Noto Sans", "Noto Sans CJK SC", sans-serif; }
.s-mark { font: italic 400 31px "Noto Sans CJK SC", sans-serif; fill: #dcdfdd; }
.halo { fill: #ff0; mix-blend-mode: multiply; }

.status {
  display: flex;
  align-items: center;
  height: 29px;
  padding-left: 9px;
  border-top: 1px solid #cdcfcd;
  background: linear-gradient(#f1f1ef, #e9e9e7);
  color: #666;
}
.count { width: 215px; }
.lang { margin-left: 21px; margin-right: auto; }
.st { gap: 5px; margin-right: 26px; }
.view { justify-content: center; width: 49px; height: 28px; background: #cfd0cf; }
.views { position: relative; width: 224px; height: 28px; padding: 5px 0 0 15px; }
.ime {
  position: absolute;
  right: 0;
  top: 0;
  z-index: 2;
  display: flex;
  align-items: center;
  justify-content: space-between;
  width: 195px;
  height: 29px;
  padding: 0 11px 0 3px;
  border: 1px solid #b9c3d4;
  background: linear-gradient(#e6eff9, #fff);
}
.ime b { font-size: 19px; color: #3f84cc; }
.zoom { width: 76px; height: 18px; margin: 0 0 0 3px; background: none; appearance: none; }
.zoom::-webkit-slider-runnable-track { height: 1px; background: #aaa; }
.zoom::-webkit-slider-thumb { appearance: none; width: 6px; height: 16px; margin-top: -8px; background: #666; }
.plus { width: 18px; justify-content: center; font-size: 20px; font-weight: 700; }
.pct { width: 51px; margin-left: 15px; }
.fit { margin-right: 9px; }

.player { position: relative; height: 77px; padding: 18px 12px 0; }
.wave { position: absolute; left: 12px; top: -12px; width: calc(100% - 24px); height: 30px; }
.orb { position: absolute; left: 19px; top: -7px; opacity: .8; }
.pin { position: absolute; right: 4px; top: 1px; }
.progress { position: relative; height: 4px; background: #333; }
.buffer { position: absolute; left: 0; top: 0; height: 4px; background: #6e6e6e; }
.played { position: absolute; left: 0; top: 0; height: 4px; background: #23ade5; }
.controls { display: grid; grid-template-columns: 474fr 717fr 577fr; height: 55px; color: #ddd; font-family: Inter, "Noto Sans CJK SC", sans-serif; }
.cl, .cc, .cr { display: flex; align-items: center; height: 57px; min-width: 0; }
.pause { margin-left: 19px; }
.next { margin-left: 37px; }
.time { margin-left: 35px; font-size: 14px; color: #eee; }
.switch { position: relative; flex: none; width: 30px; height: 20px; }
.switch input { position: absolute; width: 30px; height: 20px; margin: 0; appearance: none; border-radius: 10px; background: #757575; }
.switch span { position: absolute; left: 2px; top: 2px; width: 16px; height: 16px; border-radius: 8px; background: #fff; color: #555; font-size: 11px; line-height: 16px; text-align: center; }
.dms { margin: 0 27px 0 28px; }
.send { flex: 1; min-width: 0; display: flex; align-items: center; height: 34px; background: #5a5a5a; border-radius: 2px; font-size: 12px; overflow: hidden; }
.fontbtn { margin-left: 9px; }
.send input { flex: 1; min-width: 0; padding: 0 0 0 12px; border: 0; background: none; color: #eee; font: inherit; outline: 0; }
.send input::placeholder { color: #a6a6a6; opacity: 1; }
.send a { display: flex; align-items: center; gap: 6px; margin-right: 12px; color: #b0b0b0; text-decoration: none; white-space: nowrap; }
.submit { justify-content: center; width: 60px; height: 34px; background: #00a1d6; color: #fff; font-weight: 500; }
.cr { justify-content: flex-end; padding-right: 15px; font-weight: 500; }
.sel-ep { margin-left: 22px; }
.rate { margin-left: 28px; }
.icon-btn { justify-content: center; width: 24px; margin-left: 30px; }
</style>
